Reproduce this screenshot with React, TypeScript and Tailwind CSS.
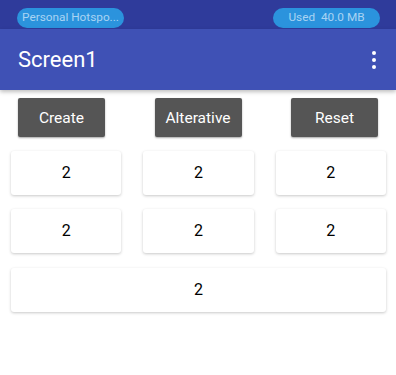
import React from "react";

const Pill = ({ children }: { children: React.ReactNode }) => (
  <div className="h-[20px] w-[107px] rounded-full bg-[#2b93dd] flex items-center justify-center text-[11.8px] text-[#a9d3f3] leading-none whitespace-nowrap">
    {children}
  </div>
);

const ActionBtn = ({ label }: { label: string }) => (
  <button className="w-[87px] h-[39px] bg-[#555555] rounded-[2px] text-white text-[15.5px] pt-[2px] shadow-[0_1px_2px_rgba(0,0,0,0.35)]">
    {label}
  </button>
);

const Cell = () => (
  <div className="h-[44px] bg-white rounded-[3px] flex items-center justify-center text-[16px] text-black shadow-[0_1px_3px_rgba(0,0,0,0.22)]">
    2
  </div>
);

export default function App() {
  return (
    <div className="w-[396px] h-[375px] bg-white overflow-hidden" style={{ fontFamily: "Roboto, 'Liberation Sans', sans-serif" }}>
      {/* status bar */}
      <div className="h-[29px] bg-[#2f3b9b] flex items-start justify-between pt-[8px] pl-[17px] pr-[16px]">
        <Pill>Personal Hotspo...</Pill>
        <Pill>Used&nbsp; 40.0 MB</Pill>
      </div>

      {/* app bar */}
      <div className="h-[61px] bg-[#3f51b5] flex items-center justify-between pl-[18px] pr-[20px] shadow-[0_2px_4px_rgba(0,0,0,0.25)] relative">
        <span className="text-white text-[22px]">Screen1</span>
        <div className="flex flex-col gap-[3px] items-center">
          <span className="w-[4px] h-[4px] rounded-full bg-white" />
          <span className="w-[4px] h-[4px] rounded-full bg-white" />
          <span className="w-[4px] h-[4px] rounded-full bg-white" />
        </div>
      </div>

      {/* buttons */}
      <div className="flex justify-between px-[18px] pt-[8px]">
        <ActionBtn label="Create" />
        <ActionBtn label="Alterative" />
        <ActionBtn label="Reset" />
      </div>

      {/* cells */}
      <div className="grid grid-cols-3 gap-x-[22px] gap-y-[14px] pl-[11px] pr-[10px] pt-[14px]">
        <Cell />
        <Cell />
        <Cell />
        <Cell />
        <Cell />
        <Cell />
        <div className="col-span-3 pt-[1px]">
          <Cell />
        </div>
      </div>
    </div>
  );
}
